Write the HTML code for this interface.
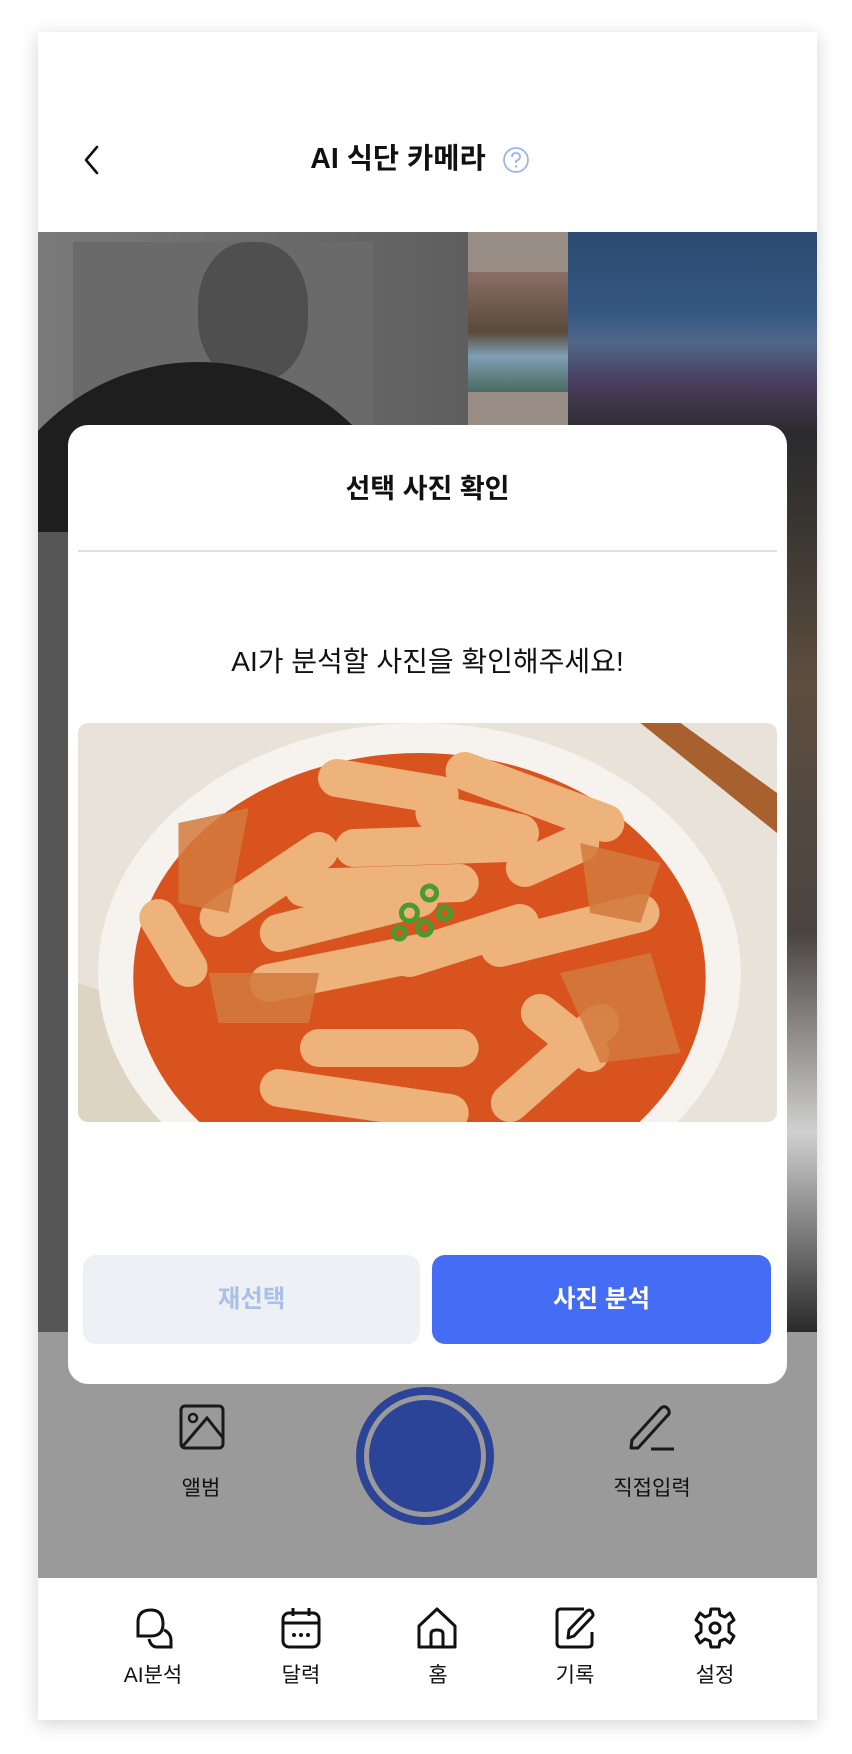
<!DOCTYPE html>
<html><head><meta charset="utf-8"><style>
*{margin:0;padding:0;box-sizing:border-box}
body{width:852px;height:1754px;background:#fff;font-family:"Liberation Sans","Noto Sans CJK KR",sans-serif;position:relative;overflow:hidden}
.frame{position:absolute;left:38px;top:32px;width:779px;height:1688px;background:#fff;box-shadow:0 4px 18px rgba(0,0,0,.18);overflow:hidden}
.abs{position:absolute}
.photo{left:0;top:200px;width:779px;height:1100px;overflow:hidden;background:#6c6c6c}
.gray{left:0;top:1300px;width:779px;height:246px;background:#9a9a9a}
.nav{left:0;top:1546px;width:779px;height:142px;background:#fff}
.modal{left:30px;top:393px;width:719px;height:959px;background:#fff;border-radius:20px}
.lbl{font-size:21px;color:#111;text-align:center;width:120px}
</style></head><body>
<div class="frame">
  <svg class="abs" style="left:42px;top:111px" width="24" height="34" viewBox="0 0 24 34"><path d="M17 4 L6 17 L17 30" fill="none" stroke="#111" stroke-width="2.6" stroke-linecap="round" stroke-linejoin="round"/></svg>
  <div class="abs" style="left:210px;width:300px;top:107px;text-align:center;font-size:28.5px;line-height:40px;font-weight:bold;color:#111">AI 식단 카메라</div>
  <svg class="abs" style="left:464px;top:114px" width="28" height="28" viewBox="0 0 28 28"><circle cx="14" cy="14" r="12" fill="none" stroke="#9bb5ec" stroke-width="1.8"/><path d="M10 11 Q10 7 14 7 Q18 7 18 11 Q18 13.5 14 15 V17" fill="none" stroke="#9bb5ec" stroke-width="1.8"/><circle cx="14" cy="20.5" r="1.2" fill="#9bb5ec"/></svg>

  <div class="abs photo">
    <div class="abs" style="left:0;top:0;width:430px;height:1100px;background:linear-gradient(90deg,#7a7a7a,#5e5e5e)"></div>
    <div class="abs" style="left:35px;top:10px;width:300px;height:300px;background:#6a6a6a"></div>
    <div class="abs" style="left:160px;top:10px;width:110px;height:140px;border-radius:45%;background:#4f4f4f"></div>
    <div class="abs" style="left:-60px;top:130px;width:440px;height:980px;border-radius:220px 220px 0 0;background:#1e1e1e"></div>
    <div class="abs" style="left:0;top:300px;width:80px;height:800px;background:#555"></div>
    <div class="abs" style="left:430px;top:0;width:100px;height:200px;background:#9a8f86"></div>
    <div class="abs" style="left:430px;top:40px;width:100px;height:120px;background:linear-gradient(#8a6e66,#5a4a3a 50%,#7f9fb5 70%,#4a6a60)"></div>
    <div class="abs" style="left:530px;top:0;width:249px;height:1100px;background:linear-gradient(#2d4a70 0,#335782 80px,#4f6787 110px,#4a3e5e 150px,#2b2b2e 200px,#3a3631 300px,#5e4e40 450px,#4a4440 700px,#d0d0d0 900px,#2a2a2a 1100px)"></div>
  </div>
  <div class="abs gray"></div>

  <div class="abs modal">
    <div class="abs" style="left:0;width:719px;top:42px;text-align:center;font-size:27px;font-weight:bold;color:#111">선택 사진 확인</div>
    <div class="abs" style="left:10px;width:699px;top:125px;height:2px;background:#e0e0e0"></div>
    <div class="abs" style="left:0;width:719px;top:215px;text-align:center;font-size:28px;color:#111">AI가 분석할 사진을 확인해주세요!</div>
    <svg class="abs" style="left:10px;top:298px;border-radius:10px" width="699" height="399" viewBox="0 0 696 399" preserveAspectRatio="none">
      <rect width="696" height="399" fill="#e9e2d8"/>
      <path d="M0 260 L120 300 L140 399 L0 399Z" fill="#ddd4c4"/>
      <path d="M560 0 L600 0 L696 70 L696 110 Z" fill="#a8602e"/>
      <ellipse cx="340" cy="250" rx="320" ry="250" fill="#f6f3ee"/>
      <ellipse cx="340" cy="255" rx="285" ry="225" fill="#d9531f"/>
      <g stroke-linecap="round" stroke="#edb37b" stroke-width="38" fill="none">
        <path d="M258 55 L360 72"/><path d="M385 48 L525 100"/><path d="M355 90 L440 110"/>
        <path d="M140 195 L240 128"/><path d="M275 125 L430 120"/><path d="M225 165 L380 160"/>
        <path d="M200 210 L340 175"/><path d="M445 145 L500 120"/><path d="M80 195 L110 245"/>
        <path d="M190 260 L340 230"/><path d="M330 235 L440 200"/><path d="M420 225 L560 190"/>
        <path d="M240 325 L380 325"/><path d="M200 365 L370 390"/><path d="M430 380 L520 300"/>
        <path d="M460 290 L510 330"/>
      </g>
      <g fill="#d27a3e" opacity=".85"><path d="M100 100 L170 85 L150 190 L100 180Z"/><path d="M130 250 L240 250 L230 300 L140 300Z"/><path d="M480 250 L570 230 L600 330 L520 340Z"/><path d="M500 120 L580 140 L560 200 L510 190Z"/></g>
      <g fill="none" stroke="#4a9a30" stroke-width="5"><circle cx="330" cy="190" r="8"/><circle cx="350" cy="170" r="7"/><circle cx="320" cy="210" r="6"/><circle cx="345" cy="205" r="7"/><circle cx="365" cy="190" r="6"/></g>
    </svg>
    <div class="abs" style="left:15px;top:830px;width:337px;height:89px;border-radius:13px;background:#edf1f6;text-align:center;line-height:89px;font-size:24.5px;font-weight:bold;color:#a8c0ea">재선택</div>
    <div class="abs" style="left:364px;top:830px;width:339px;height:89px;border-radius:13px;background:#456cf4;text-align:center;line-height:89px;font-size:24.5px;font-weight:bold;color:#fff">사진 분석</div>
  </div>

  <svg class="abs" style="left:141px;top:1372px" width="46" height="46" viewBox="0 0 46 46"><rect x="2" y="2" width="42" height="42" rx="4" fill="none" stroke="#1a1a1a" stroke-width="3"/><circle cx="14" cy="14" r="4" fill="none" stroke="#1a1a1a" stroke-width="2.5"/><path d="M4 42 L28 14 L44 34" fill="none" stroke="#1a1a1a" stroke-width="3"/></svg>
  <div class="abs lbl" style="left:103px;top:1440px">앨범</div>
  <div class="abs" style="left:318px;top:1355px;width:138px;height:138px;border-radius:50%;background:#2b4497"></div>
  <div class="abs" style="left:326px;top:1363px;width:122px;height:122px;border-radius:50%;background:#9a9a9a"></div>
  <div class="abs" style="left:331px;top:1368px;width:112px;height:112px;border-radius:50%;background:#2b4497"></div>
  <svg class="abs" style="left:589px;top:1372px" width="50" height="48" viewBox="0 0 50 48"><path d="M4 44 L5 36 L34 4 Q38 1 41 5 Q44 9 40 12 L11 44 Z" fill="none" stroke="#1a1a1a" stroke-width="3" stroke-linejoin="round"/><path d="M24 45 H47" stroke="#1a1a1a" stroke-width="3"/></svg>
  <div class="abs lbl" style="left:554px;top:1440px">직접입력</div>

  <div class="abs nav"></div>
  <svg class="abs" style="left:95px;top:1574px" width="44" height="44" viewBox="0 0 44 44"><path d="M5 28 V16 Q5 4 18 4 Q30 4 30 18 Q30 30 18 30 H5 Z" fill="none" stroke="#111" stroke-width="3"/><path d="M31 24 Q38 27 38 35 V41 H24 Q18 41 16 33" fill="none" stroke="#111" stroke-width="3"/></svg>
  <div class="abs lbl" style="left:55px;top:1627px">AI분석</div>
  <svg class="abs" style="left:242px;top:1574px" width="42" height="44" viewBox="0 0 42 44"><rect x="3" y="7" width="36" height="34" rx="6" fill="none" stroke="#111" stroke-width="3"/><path d="M3 17 H39 M13 2 V10 M29 2 V10" stroke="#111" stroke-width="3"/><circle cx="14" cy="29" r="2" fill="#111"/><circle cx="21" cy="29" r="2" fill="#111"/><circle cx="28" cy="29" r="2" fill="#111"/></svg>
  <div class="abs lbl" style="left:203px;top:1627px">달력</div>
  <svg class="abs" style="left:378px;top:1574px" width="42" height="44" viewBox="0 0 42 44"><path d="M3 41 V20 L21 3 L39 20 V41 Z" fill="none" stroke="#111" stroke-width="3" stroke-linejoin="round"/><path d="M15 41 V28 Q15 24 21 24 Q27 24 27 28 V41" fill="none" stroke="#111" stroke-width="3"/></svg>
  <div class="abs lbl" style="left:340px;top:1627px">홈</div>
  <svg class="abs" style="left:516px;top:1574px" width="42" height="44" viewBox="0 0 42 44"><path d="M30 3 H7 Q3 3 3 7 V37 Q3 41 7 41 H34 Q38 41 38 37 V26" fill="none" stroke="#111" stroke-width="3"/><path d="M14 32 L15 24 L33 5 Q36 3 38 6 Q40 9 38 11 L20 30 Z" fill="none" stroke="#111" stroke-width="3" stroke-linejoin="round"/></svg>
  <div class="abs lbl" style="left:477px;top:1627px">기록</div>
  <svg class="abs" style="left:656px;top:1574px" width="42" height="44" viewBox="0 0 42 44"><path d="M17 3 H25 L26 9 L31 11 L36 7 L40 14 L35 18 V26 L40 30 L36 37 L31 33 L26 35 L25 41 H17 L16 35 L11 33 L6 37 L2 30 L7 26 V18 L2 14 L6 7 L11 11 L16 9 Z" fill="none" stroke="#111" stroke-width="3" stroke-linejoin="round"/><circle cx="21" cy="22" r="5" fill="none" stroke="#111" stroke-width="3"/></svg>
  <div class="abs lbl" style="left:617px;top:1627px">설정</div>
</div>
</body></html>
